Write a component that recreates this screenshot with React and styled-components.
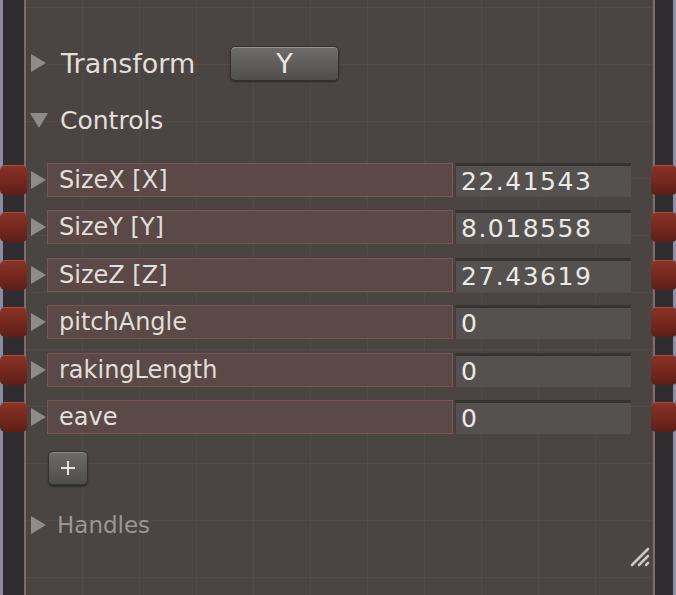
import React from 'react';
import styled, { createGlobalStyle } from 'styled-components';

const GlobalStyle = createGlobalStyle`
  html, body {
    margin: 0;
    padding: 0;
    background: #4a4442;
  }
  body {
    font-family: "DejaVu Sans", "Liberation Sans", sans-serif;
  }
`;

const Frame = styled.div`
  display: flex;
  width: 676px;
  height: 595px;
  overflow: hidden;
  background: #4a4442;
`;

const Rail = styled.div`
  flex: 0 0 auto;
  width: ${(p) => (p.side === 'left' ? '21px' : '18px')};
  background: #2f2d30;
  border-left: ${(p) => (p.side === 'left' ? '3px solid #8c8a9e' : '2px solid #7d6e6b')};
  border-right: ${(p) => (p.side === 'left' ? '2px solid #7d6b68' : '4px solid #8f8da2')};
`;

const Panel = styled.div`
  flex: 1;
  display: flex;
  flex-direction: column;
  padding-top: 43px;
  background-color: #4a4442;
  background-image:
    linear-gradient(rgba(255, 255, 255, 0.035) 1px, transparent 1px),
    linear-gradient(90deg, rgba(255, 255, 255, 0.035) 1px, transparent 1px);
  background-size: 57px 57px;
  background-position: -1px 7px;
`;

const SectionHeader = styled.div`
  display: flex;
  align-items: center;
  height: 40px;
  padding-left: 4px;
  margin-top: ${(p) => p.mt || 0}px;
  color: ${(p) => (p.dim ? '#9b9692' : '#e2ded9')};
  font-size: ${(p) => p.size || 26}px;
`;

const HeaderLabel = styled.span`
  width: ${(p) => (p.width ? `${p.width}px` : 'auto')};
  margin-left: ${(p) => p.gap || 14}px;
  white-space: nowrap;
`;

const ToggleButton = styled.button`
  width: 109px;
  height: 35px;
  border-radius: 5px;
  border: 1px solid #333031;
  background: linear-gradient(#6f6e6d, #4f4e4d);
  box-shadow: inset 0 1px 0 rgba(255, 255, 255, 0.25), 0 1px 2px rgba(0, 0, 0, 0.4);
  color: #ebe8e4;
  font-family: inherit;
  font-size: 27px;
  line-height: 1;
  padding: 0;
`;

const ParamList = styled.div`
  display: flex;
  flex-direction: column;
  gap: 13.4px;
  margin-top: 23px;
`;

const ParamRow = styled.div`
  display: flex;
  align-items: center;
  height: 34px;
`;

const Port = styled.div`
  position: relative;
  z-index: 2;
  flex: 0 0 auto;
  width: ${(p) => (p.side === 'left' ? 27 : 26)}px;
  height: 30px;
  border-radius: 5px;
  background: linear-gradient(#8a3327, #72271d 60%, #5c1e16);
  box-shadow: inset 0 1px 0 rgba(255, 150, 130, 0.25);
  margin-left: ${(p) => (p.side === 'left' ? '-26px' : '20px')};
  margin-right: ${(p) => (p.side === 'left' ? '3px' : '-24px')};
`;

const Arrow = styled.svg`
  flex: 0 0 auto;
  display: block;
`;

const LabelBox = styled.div`
  flex: 0 0 auto;
  box-sizing: border-box;
  width: 406px;
  height: 34px;
  display: flex;
  align-items: center;
  padding-left: 11px;
  background: #5a4946;
  border: 1.5px solid #7a5551;
  color: #e2ded9;
  font-size: 24px;
  white-space: nowrap;
`;

const ValueBox = styled.div`
  flex: 0 0 auto;
  box-sizing: border-box;
  width: 176px;
  height: 34px;
  display: flex;
  align-items: center;
  padding-left: 5px;
  margin-left: 2px;
  background: #555150;
  border-top: 3px solid #363332;
  border-left: 1px solid #403d3c;
  color: #ece8e4;
  font-size: 25px;
  letter-spacing: 1.5px;
  white-space: nowrap;
`;

const AddButton = styled.button`
  width: 40px;
  height: 34px;
  margin: 17px 0 0 22px;
  border-radius: 5px;
  border: 1px solid #343132;
  background: linear-gradient(#6c6b6a, #4e4d4c);
  box-shadow: inset 0 1px 0 rgba(255, 255, 255, 0.22), 0 2px 2px rgba(0, 0, 0, 0.35);
  display: flex;
  align-items: center;
  justify-content: center;
  padding: 0;
`;

const Footer = styled.div`
  display: flex;
  justify-content: flex-end;
  padding-right: 1px;
`;

const RightArrow = ({ color = '#8e8b88' }) => (
  <Arrow width="17" height="20" viewBox="0 0 17 20">
    <polygon points="1,1 16,10 1,19" fill={color} />
  </Arrow>
);

const DownArrow = () => (
  <Arrow width="18" height="17" viewBox="0 0 18 17">
    <polygon points="0,1 18,1 9,16" fill="#8e8b88" />
  </Arrow>
);

const params = [
  { name: 'SizeX [X]', value: '22.41543' },
  { name: 'SizeY [Y]', value: '8.018558' },
  { name: 'SizeZ [Z]', value: '27.43619' },
  { name: 'pitchAngle', value: '0' },
  { name: 'rakingLength', value: '0' },
  { name: 'eave', value: '0' },
];

export default function App() {
  return (
    <>
      <GlobalStyle />
      <Frame>
        <Rail side="left" />
        <Panel>
          <SectionHeader size={27}>
            <RightArrow />
            <HeaderLabel width={169} gap={14}>Transform</HeaderLabel>
            <ToggleButton>Y</ToggleButton>
          </SectionHeader>
          <SectionHeader mt={17} size={25}>
            <DownArrow />
            <HeaderLabel gap={12}>Controls</HeaderLabel>
          </SectionHeader>
          <ParamList>
            {params.map((param) => (
              <ParamRow key={param.name}>
                <Port side="left" />
                <RightArrow />
                <LabelBox>{param.name}</LabelBox>
                <ValueBox>{param.value}</ValueBox>
                <Port side="right" />
              </ParamRow>
            ))}
          </ParamList>
          <AddButton>
            <svg width="16" height="16" viewBox="0 0 16 16">
              <path d="M8 1v14M1 8h14" stroke="#e6e3df" strokeWidth="2" />
            </svg>
          </AddButton>
          <SectionHeader mt={20} size={23} dim>
            <RightArrow />
            <HeaderLabel gap={10}>Handles</HeaderLabel>
          </SectionHeader>
          <Footer>
            <svg width="22" height="22" viewBox="0 0 22 22">
              <g stroke="#c9c5c1" strokeWidth="2.6" strokeLinecap="round">
                <path d="M2 20L18 4" />
                <path d="M9 20L18 11" />
                <path d="M16 20L18 18" />
              </g>
            </svg>
          </Footer>
        </Panel>
        <Rail side="right" />
      </Frame>
    </>
  );
}
